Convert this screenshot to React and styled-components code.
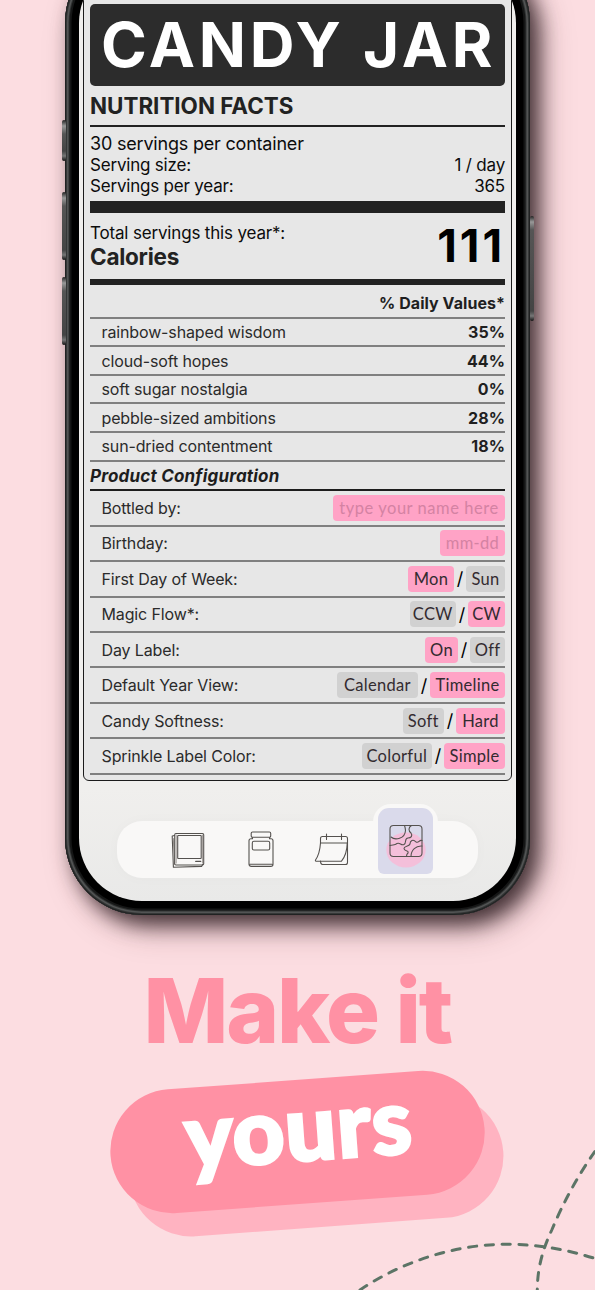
import React from 'react'
import styled, { createGlobalStyle } from 'styled-components'

const GlobalStyle = createGlobalStyle`
  * {
    box-sizing: border-box;
  }

  body {
    margin: 0;
    background: #fcdde1;
    font-family: Inter, sans-serif;
  }
`

const Page = styled.main`
  position: relative;
  width: 595px;
  height: 1290px;
  overflow: hidden;
  background: #fcdde1;
  display: flex;
  flex-direction: column;
`

const Phone = styled.div`
  position: relative;
  flex: none;
  width: 465px;
  height: 969px;
  margin: -54px 0 0 65px;
  padding: 14px;
  border-radius: 77px;
  background: #000;
  box-shadow:
    inset 0 0 0 1px #202222,
    inset 0 0 0 2px #353737,
    inset 0 0 0 3.5px #525454,
    inset 0 0 0 4.5px #303232,
    inset 0 0 0 6.5px #151616,
    9px 10px 20px rgba(20, 5, 10, 0.72),
    12px 14px 34px rgba(60, 20, 30, 0.28);
`

const SideButton = styled.span`
  position: absolute;
  top: ${({ $top }) => $top}px;
  ${({ $right }) => ($right ? 'right: -4px;' : 'left: -3px;')}
  width: 4px;
  height: ${({ $height }) => $height}px;
  border-radius: 2px;
  background: linear-gradient(#222 0, #999 6px, #555 14px, #444 calc(100% - 10px), #777 calc(100% - 5px), #111 100%);
`

const Screen = styled.div`
  height: 941px;
  border-radius: 63px;
  overflow: hidden;
  background: linear-gradient(#f0efed 88%, #e9e9e8);
  display: flex;
  flex-direction: column;
`

const Panel = styled.section`
  flex: none;
  margin: 0 4px;
  padding: 42.5px 6px 5.6px;
  border: 1.3px solid #1b1b1b;
  border-radius: 0 0 6px 6px;
  background: #e7e7e7;
  color: #0c0c0c;
`

const Title = styled.h1`
  height: 82px;
  margin: 0;
  padding-left: 11px;
  border-radius: 5px;
  background: #2c2c2c;
  color: #fff;
  font-size: 62px;
  font-weight: 700;
  line-height: 82px;
  letter-spacing: ${({ $track }) => $track}px;
  white-space: nowrap;
`

const Heading = styled.h2`
  height: 41.5px;
  margin: 0;
  border-bottom: 2px solid #222;
  color: #222;
  font-size: 22.4px;
  font-weight: 700;
  line-height: 39px;
`

const Facts = styled.div`
  height: 74px;
  padding-top: 6px;
`

const Fact = styled.div`
  display: flex;
  justify-content: space-between;
  font-size: ${({ $large }) => ($large ? 18 : 17)}px;
  line-height: ${({ $large }) => ($large ? 22 : 20.7)}px;
  letter-spacing: -0.2px;
`

const Bar = styled.div`
  height: ${({ $height }) => $height}px;
  background: #222;
`

const Total = styled.div`
  height: 66.5px;
  display: flex;
  justify-content: space-between;
  align-items: center;
`

const TotalLabels = styled.div`
  padding-bottom: 2px;
`

const TotalLabel = styled.div`
  font-size: 17px;
  line-height: 24px;
  letter-spacing: -0.17px;
`

const Calories = styled.div`
  color: #222;
  font-size: 22.5px;
  font-weight: 700;
  line-height: 24px;
  letter-spacing: -0.25px;
`

const Count = styled.div`
  color: #000;
  font-size: 45.5px;
  font-weight: 700;
  letter-spacing: 3px;
`

const Row = styled.div`
  height: ${({ $tall }) => ($tall ? 35.45 : 28.57)}px;
  padding-left: 11.5px;
  border-bottom: 2px solid #808080;
  display: flex;
  align-items: center;
  justify-content: space-between;
  color: #2b2b2b;
  font-size: 16px;
  letter-spacing: -0.13px;
`

const DailyRow = styled(Row)`
  height: 34.3px;
  padding-top: 5px;
  justify-content: flex-end;
`

const Percent = styled.span`
  color: #1f1f1f;
  font-weight: 700;
  letter-spacing: 0.05px;
`

const ConfigHeading = styled.h3`
  height: 29.6px;
  margin: 0;
  border-bottom: 2px solid #1d1d1d;
  color: #1d1d1d;
  font-size: 17px;
  font-style: italic;
  font-weight: 700;
  line-height: 28px;
  letter-spacing: 0.2px;
`

const Options = styled.div`
  display: flex;
  align-items: center;
`

const Slash = styled.span`
  width: 12px;
  text-align: center;
  color: #000;
  font-size: 18px;
`

const Chip = styled.span`
  width: ${({ $width }) => $width}px;
  height: 26px;
  border-radius: 4px;
  background: ${({ $on }) => ($on ? '#ffa3c6' : '#d1d1d1')};
  color: ${({ $faded }) => ($faded ? '#d482a3' : '#332b30')};
  font-family: Lato, sans-serif;
  font-size: 16.5px;
  line-height: 26px;
  letter-spacing: ${({ $track }) => $track || 0.3}px;
  text-align: center;
  white-space: nowrap;
`

const TabBar = styled.nav`
  flex: none;
  width: 361px;
  height: 57px;
  margin: 39.6px auto 0;
  border-radius: 25px;
  background: #f9f8f7;
  box-shadow: 0 0 14px rgba(0, 0, 0, 0.025);
  display: flex;
  align-items: flex-end;
  padding-left: 34px;
`

const Tab = styled.div`
  width: 73.5px;
  height: 57px;
  padding-top: 1.5px;
  display: flex;
  align-items: center;
  justify-content: center;
`

const ActiveTab = styled.div`
  width: 65px;
  height: 74px;
  margin-left: 1.5px;
  padding: 4px 5px;
  border-radius: 18px 18px 0 0;
  background: #f9f8f7;
`

const ActiveTile = styled.div`
  height: 66px;
  border-radius: 11px 11px 6px 6px;
  background: #dadaeb;
`

const Icon = styled.svg`
  display: block;
  fill: none;
  stroke: #55524f;
  stroke-width: 1.1;
  stroke-linecap: round;
  stroke-linejoin: round;
`

const Headline = styled.h2`
  margin: 42px 0 0 143.5px;
  color: #ff91a4;
  font-size: 90px;
  font-weight: 800;
  line-height: 108px;
  letter-spacing: -2.2px;
  white-space: nowrap;
`

const Pill = styled.div`
  flex: none;
  width: 375px;
  height: 123.5px;
  margin: 15px 0 0 110px;
  padding-left: 4px;
  border-radius: 62px;
  background: #ff91a4;
  box-shadow: 17px 24.5px 0 #ffb3c1;
  transform: rotate(-4.2deg);
  color: #fff;
  font-family: Lato, sans-serif;
  font-size: 90px;
  font-weight: 900;
  line-height: 92px;
  letter-spacing: 1px;
  text-align: center;
  -webkit-text-stroke: 3px #fff;
`

const Stitches = styled.svg`
  position: absolute;
  right: 0;
  bottom: 0;
  fill: none;
  stroke: #5c7466;
  stroke-width: 3;
  stroke-linecap: round;
  stroke-dasharray: 8.2 8.6;
`

const values = [
  ['rainbow-shaped wisdom', '35%'],
  ['cloud-soft hopes', '44%'],
  ['soft sugar nostalgia', '0%'],
  ['pebble-sized ambitions', '28%'],
  ['sun-dried contentment', '18%'],
]

// each option: text, chip width, selected
const settings = [
  ['First Day of Week:', ['Mon', 46, true], ['Sun', 39, false]],
  ['Magic Flow*:', ['CCW', 46.5, false], ['CW', 37, true]],
  ['Day Label:', ['On', 33, true], ['Off', 35, false]],
  ['Default Year View:', ['Calendar', 81, false], ['Timeline', 75, true]],
  ['Candy Softness:', ['Soft', 41.5, false], ['Hard', 49, true]],
  ['Sprinkle Label Color:', ['Colorful', 70.5, false], ['Simple', 61, true]],
]

const PhotoIcon = () => (
  <Icon width='36' height='40' viewBox='0 0 36 40'>
    <path d='M4.5 5.5 2.2 6l1.2 31.2 28.2-.8 1-2' />
    <path d='M3.3 8.5 4.5 34' stroke='#96918e' />
    <rect x='4.7' y='3.5' width='29' height='31.5' rx='1.2' />
    <rect x='7.7' y='5.5' width='23.5' height='23' rx='.6' />
    <path d='M6.2 5v28M32.5 5v28' stroke='#aaa5a2' />
    <path d='M25.7 31.4h5' strokeWidth='1.2' />
  </Icon>
)

const JarIcon = () => (
  <Icon width='28' height='40' viewBox='0 0 28 40'>
    <rect x='4.2' y='2' width='19.5' height='5.3' rx='1.3' />
    <path d='M5.5 7.5v1.2H4a2 2 0 0 0-2 2v23.5a2.2 2.2 0 0 0 2.2 2.2h19.6a2.2 2.2 0 0 0 2.2-2.2V10.7a2 2 0 0 0-2-2h-1.5V7.5M3 34.3h22' />
    <rect x='5.3' y='11.3' width='17.4' height='8.7' rx='1.6' />
  </Icon>
)

const CalendarIcon = () => (
  <Icon width='42' height='34' viewBox='0 0 42 34'>
    <path d='M6.5 10V5.5a2 2 0 0 1 2-2h23a2 2 0 0 1 2 2v24a2 2 0 0 1-2 2h-23c-1.3 0-2-.9-2-3.5' />
    <path d='M6.5 10h27M12.5 1v5.5M27.5 1v5.5' />
    <path d='M6.5 10C6 17 4 23.5 1.5 27q-.4 1 .6 1.2h25.4C31 24 33 17 33.3 10' />
  </Icon>
)

const FlowIcon = () => (
  <Icon width='54' height='66' viewBox='0 0 54 66'>
    <ellipse cx='28' cy='42' rx='19.7' ry='17.5' fill='#f4bfda' stroke='none' />
    <rect x='12' y='17.5' width='32' height='31' rx='3.5' />
    <path d='M13 29c4 3.5 14 2 14.5-6.5 0-2-.5-3.5-1-5' />
    <path d='M33.5 17.5c-3.5 2-3 5.5-.5 7.5 2 3 0 5-3 5-4 0-1 5-4 6.5-3 1.5-4-2.5-7-1-2.5 2-4 1-7 2' />
    <path d='M44 32.5c-3-1-3 3-6 1.5-3-3.5-6-1-6 2-1 3-6 1.5-6 4.500 0 3 5 1.500 4 4.500-2 2-1 2-1.500 3.500' />
    <path d='M44 38c-6-.5-11 4-11 10.5' />
  </Icon>
)

const App = () => {
  return (
    <>
      <GlobalStyle />
      <Page>
        <Phone>
          <SideButton $top={174} $height={41} />
          <SideButton $top={246} $height={68} />
          <SideButton $top={331} $height={68} />
          <SideButton $right $top={270} $height={105} />
          <Screen>
            <Panel>
              <Title $track={3.7}>CANDY JAR</Title>
              <Heading>NUTRITION FACTS</Heading>
              <Facts>
                <Fact $large>30 servings per container</Fact>
                <Fact>
                  <span>Serving size:</span>
                  <span>1 / day</span>
                </Fact>
                <Fact>
                  <span>Servings per year:</span>
                  <span>365</span>
                </Fact>
              </Facts>
              <Bar $height={11.5} />
              <Total>
                <TotalLabels>
                  <TotalLabel>Total servings this year*:</TotalLabel>
                  <Calories>Calories</Calories>
                </TotalLabels>
                <Count>111</Count>
              </Total>
              <Bar $height={5.5} />
              <DailyRow>
                <Percent>% Daily Values*</Percent>
              </DailyRow>
              {values.map(([name, percent]) => (
                <Row key={name}>
                  <span>{name}</span>
                  <Percent>{percent}</Percent>
                </Row>
              ))}
              <ConfigHeading>Product Configuration</ConfigHeading>
              <Row $tall>
                <span>Bottled by:</span>
                <Chip $on $faded $width={172} $track={0.55}>type your name here</Chip>
              </Row>
              <Row $tall>
                <span>Birthday:</span>
                <Chip $on $faded $width={65}>mm-dd</Chip>
              </Row>
              {settings.map(([name, first, second]) => (
                <Row $tall key={name}>
                  <span>{name}</span>
                  <Options>
                    <Chip $width={first[1]} $on={first[2]}>{first[0]}</Chip>
                    <Slash>/</Slash>
                    <Chip $width={second[1]} $on={second[2]}>{second[0]}</Chip>
                  </Options>
                </Row>
              ))}
            </Panel>
            <TabBar>
              <Tab><PhotoIcon /></Tab>
              <Tab><JarIcon /></Tab>
              <Tab><CalendarIcon /></Tab>
              <ActiveTab>
                <ActiveTile><FlowIcon /></ActiveTile>
              </ActiveTab>
            </TabBar>
          </Screen>
        </Phone>
        <Headline>Make it</Headline>
        <Pill>yours</Pill>
        <Stitches width='255' height='160' viewBox='0 0 255 160'>
          <path d='M20 160C58 134 112 114 167 114.3c31 0 59 5 89 14.5' />
          <path d='M255 21.5c-18 25-33 54-43 78C203 119 197.3 137 197.3 161' />
        </Stitches>
      </Page>
    </>
  )
}

export default App
